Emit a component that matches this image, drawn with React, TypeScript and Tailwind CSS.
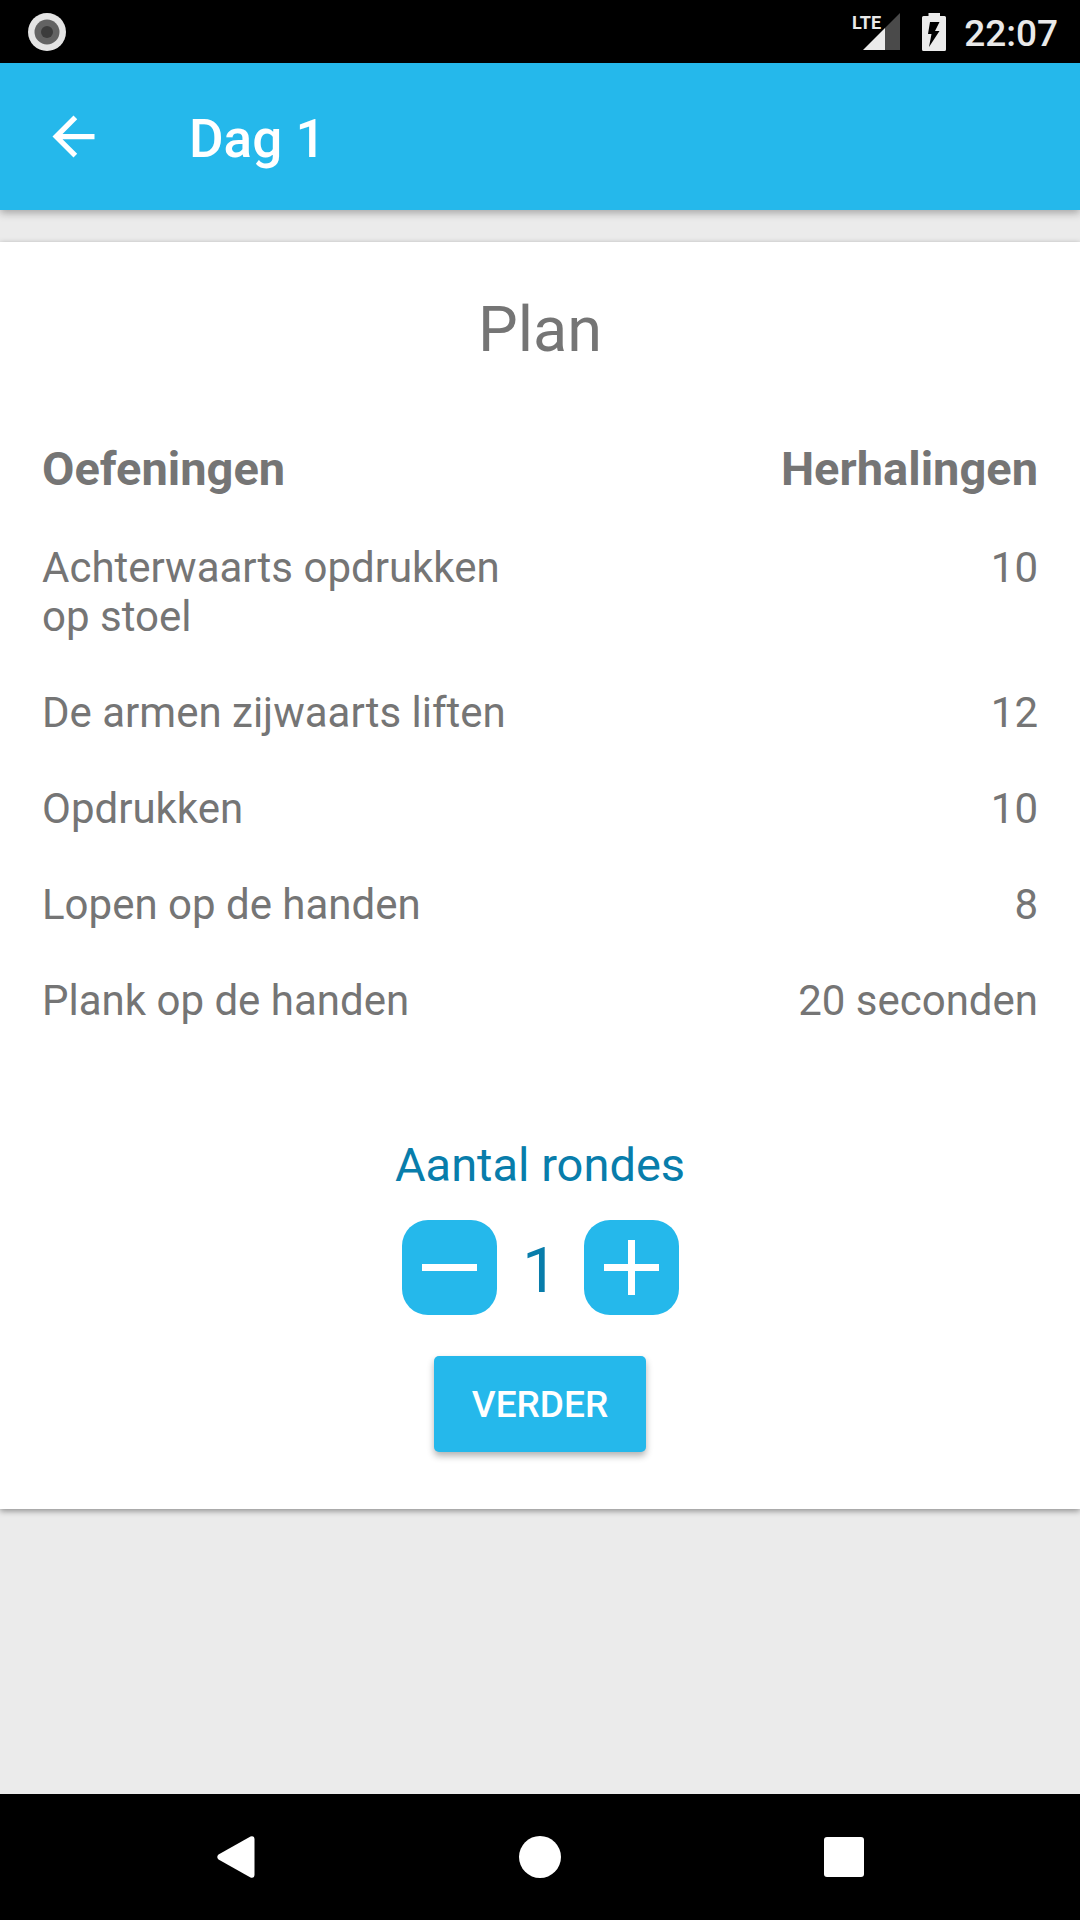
import { useState } from "react";

const exercises = [
  { name: "Achterwaarts opdrukken op stoel", amount: "10" },
  { name: "De armen zijwaarts liften", amount: "12" },
  { name: "Opdrukken", amount: "10" },
  { name: "Lopen op de handen", amount: "8" },
  { name: "Plank op de handen", amount: "20 seconden" },
];

function StatusBar() {
  return (
    <div className="flex h-[63px] items-center justify-between bg-black pl-7 pr-[22px] text-[#e9e9e9]">
      <svg className="size-[38px]" viewBox="0 0 38 38" aria-hidden="true">
        <circle cx="19" cy="19" r="19" fill="#e4e4e4" />
        <circle cx="19" cy="19" r="12.5" fill="#636363" />
        <circle cx="19" cy="19" r="6" fill="#3c3c3c" />
      </svg>
      <div className="flex items-center">
        <svg className="h-[38px] w-[48px]" viewBox="0 0 48 38" aria-label="LTE">
          <path d="M33 15L48 0V37H33Z" fill="#4a4a4a" />
          <path d="M11 37L33 15V37Z" fill="#ebebeb" />
          <text x="0" y="16" fontSize="18" fontWeight="700" fill="#e9e9e9">
            LTE
          </text>
        </svg>
        <svg className="ml-[22px] h-[38px] w-6" viewBox="0 0 24 38" aria-label="Batterij laadt op">
          <path
            fillRule="evenodd"
            fill="#ebebeb"
            d="M6.500 0H18V3H22.500Q24 3 24 4.500V36.500Q24 38 22.500 38H1.500Q0 38 0 36.500V4.500Q0 3 1.500 3H6.500ZM8 9L6 21H9.500L7 34L17.500 18H13L17.500 9Z"
          />
        </svg>
        <span className="ml-[18px] pt-1 text-[37px] leading-[43px] font-medium">22:07</span>
      </div>
    </div>
  );
}

function Header() {
  return (
    <header className="relative z-10 flex h-[147px] items-center gap-[84px] bg-[#25b8eb] px-[42px] text-white shadow-[0_3px_8px_rgba(0,0,0,0.3)]">
      <button type="button" aria-label="Terug">
        <svg className="size-[63px]" viewBox="0 0 24 24" fill="currentColor">
          <path d="M20 11H7.830l5.590-5.590L12 4l-8 8 8 8 1.410-1.410L7.830 13H20v-2z" />
        </svg>
      </button>
      <h1 className="pt-1 text-[53px] leading-[62px] font-medium">Dag 1</h1>
    </header>
  );
}

function NavBar() {
  return (
    <nav className="grid h-[126px] grid-cols-3 items-center justify-items-center bg-black px-[84px] text-white">
      <button type="button" aria-label="Vorige">
        <svg className="size-[42px]" viewBox="0 0 42 42" fill="currentColor">
          <path d="M3.500 18.500L35.500 0.500Q39.500 -0.500 39.500 3.500V38.500Q39.500 42.500 35.500 41.500L3.500 23.500Q1 21 3.500 18.500Z" />
        </svg>
      </button>
      <button type="button" aria-label="Startscherm">
        <svg className="size-[42px]" viewBox="0 0 42 42" fill="currentColor">
          <circle cx="21" cy="21" r="21" />
        </svg>
      </button>
      <button type="button" aria-label="Overzicht">
        <svg className="size-[42px]" viewBox="0 0 42 42" fill="currentColor">
          <rect x="1" y="1" width="40" height="40" rx="3" />
        </svg>
      </button>
    </nav>
  );
}

export default function App() {
  const [rounds, setRounds] = useState(1);

  return (
    <div className="flex min-h-screen flex-col bg-[#ebebeb] font-['Roboto',sans-serif]">
      <StatusBar />
      <Header />
      <main className="flex-1 pt-8">
        <section className="flex flex-col items-center bg-white px-[42px] pt-[51px] pb-[57px] text-[#757575] shadow-[0_2px_6px_rgba(0,0,0,0.4)]">
          <h2 className="text-[63px] leading-[74px]">Plan</h2>

          <table className="mt-[74px] w-full table-fixed text-[42px] leading-[49px]">
            <thead>
              <tr className="text-[47px] leading-[55px]">
                <th scope="col" className="p-0 text-left font-bold">Oefeningen</th>
                <th scope="col" className="p-0 text-right font-bold">Herhalingen</th>
              </tr>
            </thead>
            <tbody>
              {exercises.map((exercise) => (
                <tr key={exercise.name} className="align-top">
                  <td className="px-0 pt-[47px] pb-0">{exercise.name}</td>
                  <td className="px-0 pt-[47px] pb-0 text-right">{exercise.amount}</td>
                </tr>
              ))}
            </tbody>
          </table>

          <div className="mt-28 flex flex-col items-center text-[#087dab]">
            <p id="rounds-label" className="text-[47px] leading-[55px]">Aantal rondes</p>
            <div role="group" aria-labelledby="rounds-label" className="mt-7 flex items-end">
              <button
                type="button"
                aria-label="Minder rondes"
                className="rounded-[26px] bg-[#25b8eb] text-white"
                onClick={() => setRounds(Math.max(1, rounds - 1))}
              >
                <svg className="size-[95px]" viewBox="0 0 95 95" fill="currentColor">
                  <rect x="20" y="44" width="55" height="7" />
                </svg>
              </button>
              <output className="min-w-[87px] pb-[7px] text-center text-[63px] leading-[74px]">{rounds}</output>
              <button
                type="button"
                aria-label="Meer rondes"
                className="rounded-[26px] bg-[#25b8eb] text-white"
                onClick={() => setRounds(rounds + 1)}
              >
                <svg className="size-[95px]" viewBox="0 0 95 95" fill="currentColor">
                  <path d="M44 20H51V44H75V51H51V75H44V51H20V44H44Z" />
                </svg>
              </button>
            </div>
          </div>

          <button
            type="button"
            className="mt-[41px] h-24 rounded-[5px] bg-[#25b8eb] px-[38px] text-[37px] leading-[43px] font-medium text-white shadow-[0_4px_7px_rgba(0,0,0,0.3)]"
          >
            VERDER
          </button>
        </section>
      </main>
      <NavBar />
    </div>
  );
}
